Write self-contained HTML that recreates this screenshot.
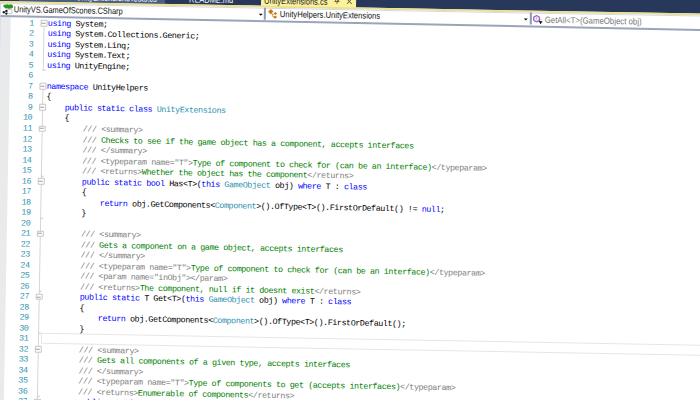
<!DOCTYPE html>
<html lang="en"><head><meta charset="utf-8"><title>UnityExtensions.cs</title>
<style>

html,body{margin:0;padding:0;width:700px;height:400px;overflow:hidden;background:#fff;}
#clip{position:absolute;left:0;top:0;width:700px;height:400px;overflow:hidden;background:#fff;}
#warp{position:absolute;left:0;top:0;width:0;height:0;transform-origin:0 0;
  transform:matrix(1.0,0.018,-0.0178,1.0,0.0,0.0);}
#warp>*{position:absolute;}
.strip{left:-60px;top:-60px;width:900px;height:61.3px;background:#28385b;}
.tab1{left:18.5px;top:-20px;width:146.5px;height:21.3px;background:#4a5f86;}
.tab3{left:261.1px;top:-20px;width:94.6px;height:22px;background:#fbf2a0;}
.ui{font-family:"Liberation Sans",sans-serif;line-height:12px;height:12px;white-space:pre;transform-origin:0 50%;}
.yel{left:-60px;top:1.2px;width:900px;height:1.8px;background:#ece08a;}
.nav{left:-60px;top:3.0px;width:900px;height:14px;background:#fff;border-top:0.6px solid #d3d9e6;}
.navb{left:-60px;top:14.7px;width:900px;height:1.5px;background:#9aa4bb;transform-origin:60px 0;transform:rotate(0.105deg);}
.arrow{width:0;height:0;border-left:2.1px solid transparent;border-right:2.1px solid transparent;border-top:2.5px solid #0c0c0c;}
.sep{top:3.2px;width:1.7px;height:11.6px;background:#8d98b1;}
.margin{left:-60px;top:15.5px;width:70.8px;height:500px;background:#e9eaec;}
.edge{left:-2px;top:3px;width:2.9px;height:420px;background:#cfd6e4;}
.code{left:0;top:17.85px;font-family:"Liberation Mono", "DejaVu Sans Mono", monospace;font-size:8.4px;line-height:10.516px;letter-spacing:-0.4288px;color:#000;white-space:pre;}
.ln{position:absolute;right:-34.3px;width:40px;text-align:right;color:#2b91af;height:10.516px;}
.cl{position:absolute;left:48.3px;height:10.516px;}
.k{color:#0000ff;} .t{color:#2b91af;} .c{color:#008000;} .x{color:#808080;}
.fold{position:absolute;box-sizing:border-box;width:6.9px;height:6.5px;border:1px solid #c6c6c6;border-radius:1px;background:#fff;left:40.9px;}
.fold i{position:absolute;left:0.6px;top:1.8px;width:3.7px;height:0.9px;background:#9c9c9c;}
.vline{position:absolute;left:43.9px;width:1.4px;background:#d6d6d6;}
.tick{position:absolute;left:43.9px;width:2.9px;height:1px;background:#cccccc;}
.cur{left:46.85px;top:332.3px;width:900px;height:8.5px;border:1.1px solid #e6e6e6;background:#fff;}

</style></head><body><div id="clip"><div id="warp">
<div class="strip"></div>
<div class="tab1"></div>
<div class="ui" style="left:75.6px;top:-10.33px;font-size:8.9px;color:#fff;transform:scaleX(0.8440)">UnityExtensionsTests.cs</div>
<div class="ui" style="left:188.7px;top:-10.33px;font-size:8.9px;color:#fff;transform:scaleX(0.8373)">README.md</div>
<div class="tab3"></div>
<div class="ui" style="left:263.9px;top:-10.38px;font-size:8.9px;color:#1a1a1a;transform:scaleX(0.8459)">UnityExtensions.cs</div>
<svg style="left:334.2px;top:-10.4px" width="6" height="8.4" viewBox="0 0 6 8.4"><path d="M1.5 5.4 V1 H4.3 V5.4 M3.6 1 V5.4 M0.3 5.5 H5.5 M2.9 5.5 V8.1" fill="none" stroke="#5d4d26" stroke-width="0.8"/></svg>
<svg style="left:345.8px;top:-8.1px" width="6.4" height="6.4" viewBox="0 0 6.4 6.4"><path d="M0.7 0.7 L5.7 5.7 M5.7 0.7 L0.7 5.7" fill="none" stroke="#514320" stroke-width="0.95"/></svg>
<div class="yel"></div>
<div class="nav"></div>
<svg style="left:1.6px;top:3.7px" width="12" height="11.5" viewBox="0 0 12 11.5"><path d="M1.2 1.6 Q2.4 0.2 4 0.6 L5 0.1 Q6.2 -0.2 7 0.5 L8.4 0 Q10.2 -0.1 10.8 1 Q11.4 2.4 10.9 3.6 Q10 4.6 8.6 4.2 L7.4 4.5 Q6.2 4.7 5.4 4.2 Q3.4 4.6 2.6 3.4 Q1.6 2.8 1.2 1.6 Z" fill="#2a9424"/><rect x="5.6" y="5.4" width="4.6" height="4.2" fill="#fff" stroke="#aab2c4" stroke-width="0.7"/><circle cx="1.9" cy="8.2" r="1.15" fill="#1d1d1d"/><circle cx="4.6" cy="6.8" r="1.1" fill="#1d1d1d"/><circle cx="4.6" cy="9.6" r="1.1" fill="#1d1d1d"/><path d="M1.9 8.2 L4.6 6.8 M1.9 8.2 L4.6 9.6" stroke="#1d1d1d" stroke-width="0.6"/></svg>
<div class="ui" style="left:14.2px;top:3.27px;font-size:8.9px;color:#141414;transform:scaleX(0.8362)">UnityVS.GameOfScones.CSharp</div>
<div class="arrow" style="left:258.6px;top:8.9px"></div>
<div class="sep" style="left:264.2px"></div>
<svg style="left:268.0px;top:4.0px" width="10" height="10" viewBox="0 0 10 10"><path d="M2.9 3.6 L4.6 5.4 H6 M4.2 5 L5.4 8.2 H6.2" fill="none" stroke="#c98a3c" stroke-width="0.8"/><path d="M0.2 2.9 L3 0.2 L5.6 2.6 L2.8 5.3 Z" fill="#cc7a10"/><path d="M5.6 4.6 L7.6 3.1 L9.4 4.6 L7.6 6.1 Z" fill="#cc7a10"/><path d="M5.4 8.1 L7.4 6.6 L9.3 8.1 L7.4 9.7 Z" fill="#cc7a10"/></svg>
<div class="ui" style="left:279.5px;top:3.22px;font-size:8.9px;color:#141414;transform:scaleX(0.8581)">UnityHelpers.UnityExtensions</div>
<div class="arrow" style="left:524.2px;top:9.2px"></div>
<div class="sep" style="left:529.9px"></div>
<svg style="left:532.8px;top:4.8px" width="11" height="11" viewBox="0 0 11 11"><path d="M0.9 2.5 L3.7 0.8 L6.6 2.5 L6.6 5.6 L3.7 7.3 L0.9 5.6 Z" fill="#f4eefa" stroke="#9a68c6" stroke-width="1.3" stroke-linejoin="round"/><path d="M3.7 2.6 V5" fill="none" stroke="#b08ad6" stroke-width="0.7"/><path d="M5.8 6.4 H9.8 L7.8 9.4 Z" fill="#151515"/><path d="M7 4.2 V5.6 M8.4 4.4 V5.6" stroke="#444" stroke-width="0.5" stroke-dasharray="0.5 0.5"/></svg>
<div class="ui" style="left:545.3px;top:3.82px;font-size:8.9px;color:#787878;transform:scaleX(0.8794)">GetAll&lt;T&gt;(GameObject obj)</div>
<div class="margin"></div>
<div class="navb"></div>
<div class="edge"></div>
<div class="cur"></div>
<div class="code">
<span class="vline" style="top:5.258px;height:47.1704px"></span>
<span class="vline" style="top:68.354px;height:420.64px"></span>
<span class="tick" style="top:51.528400000000005px"></span>
<span class="tick" style="top:156.6884px"></span>
<span class="tick" style="top:198.7524px"></span>
<span class="tick" style="top:272.3644px"></span>
<span class="tick" style="top:314.4284px"></span>
<span class="tick" style="top:377.52439999999996px"></span>
<span class="ln" style="top:0.0px">1</span>
<span class="fold" style="top:1.508px"><i></i></span>
<span class="cl" style="top:0.0px"><span class="k">using</span> System;</span>
<span class="ln" style="top:10.516px">2</span>
<span class="cl" style="top:10.516px"><span class="k">using</span> System.Collections.Generic;</span>
<span class="ln" style="top:21.032px">3</span>
<span class="cl" style="top:21.032px"><span class="k">using</span> System.Linq;</span>
<span class="ln" style="top:31.548000000000002px">4</span>
<span class="cl" style="top:31.548000000000002px"><span class="k">using</span> System.Text;</span>
<span class="ln" style="top:42.064px">5</span>
<span class="cl" style="top:42.064px"><span class="k">using</span> UnityEngine;</span>
<span class="ln" style="top:52.58px">6</span>
<span class="ln" style="top:63.096000000000004px">7</span>
<span class="fold" style="top:64.604px"><i></i></span>
<span class="cl" style="top:63.096000000000004px"><span class="k">namespace</span> UnityHelpers</span>
<span class="ln" style="top:73.612px">8</span>
<span class="cl" style="top:73.612px">{</span>
<span class="ln" style="top:84.128px">9</span>
<span class="fold" style="top:85.636px"><i></i></span>
<span class="cl" style="top:84.128px">    <span class="k">public static class</span> <span class="t">UnityExtensions</span></span>
<span class="ln" style="top:94.644px">10</span>
<span class="cl" style="top:94.644px">    {</span>
<span class="ln" style="top:105.16px">11</span>
<span class="fold" style="top:106.66799999999999px"><i></i></span>
<span class="cl" style="top:105.16px">        <span class="x">/// &lt;summary&gt;</span></span>
<span class="ln" style="top:115.676px">12</span>
<span class="cl" style="top:115.676px">        <span class="x">///</span><span class="c"> Checks to see if the game object has a component, accepts interfaces</span></span>
<span class="ln" style="top:126.19200000000001px">13</span>
<span class="cl" style="top:126.19200000000001px">        <span class="x">/// &lt;/summary&gt;</span></span>
<span class="ln" style="top:136.708px">14</span>
<span class="cl" style="top:136.708px">        <span class="x">/// &lt;typeparam name="T"&gt;</span><span class="c">Type of component to check for (can be an interface)</span><span class="x">&lt;/typeparam&gt;</span></span>
<span class="ln" style="top:147.224px">15</span>
<span class="cl" style="top:147.224px">        <span class="x">/// &lt;returns&gt;</span><span class="c">Whether the object has the component</span><span class="x">&lt;/returns&gt;</span></span>
<span class="ln" style="top:157.74px">16</span>
<span class="fold" style="top:159.24800000000002px"><i></i></span>
<span class="cl" style="top:157.74px">        <span class="k">public static bool</span> Has&lt;T&gt;(<span class="k">this</span> <span class="t">GameObject</span> obj) <span class="k">where</span> T : <span class="k">class</span></span>
<span class="ln" style="top:168.256px">17</span>
<span class="cl" style="top:168.256px">        {</span>
<span class="ln" style="top:178.772px">18</span>
<span class="cl" style="top:178.772px">            <span class="k">return</span> obj.GetComponents&lt;<span class="t">Component</span>&gt;().OfType&lt;T&gt;().FirstOrDefault() != <span class="k">null</span>;</span>
<span class="ln" style="top:189.288px">19</span>
<span class="cl" style="top:189.288px">        }</span>
<span class="ln" style="top:199.804px">20</span>
<span class="ln" style="top:210.32px">21</span>
<span class="fold" style="top:211.828px"><i></i></span>
<span class="cl" style="top:210.32px">        <span class="x">/// &lt;summary&gt;</span></span>
<span class="ln" style="top:220.836px">22</span>
<span class="cl" style="top:220.836px">        <span class="x">///</span><span class="c"> Gets a component on a game object, accepts interfaces</span></span>
<span class="ln" style="top:231.352px">23</span>
<span class="cl" style="top:231.352px">        <span class="x">/// &lt;/summary&gt;</span></span>
<span class="ln" style="top:241.868px">24</span>
<span class="cl" style="top:241.868px">        <span class="x">/// &lt;typeparam name="T"&gt;</span><span class="c">Type of component to check for (can be an interface)</span><span class="x">&lt;/typeparam&gt;</span></span>
<span class="ln" style="top:252.38400000000001px">25</span>
<span class="cl" style="top:252.38400000000001px">        <span class="x">/// &lt;param name="inObj"&gt;&lt;/param&gt;</span></span>
<span class="ln" style="top:262.9px">26</span>
<span class="cl" style="top:262.9px">        <span class="x">/// &lt;returns&gt;</span><span class="c">The component, null if it doesnt exist</span><span class="x">&lt;/returns&gt;</span></span>
<span class="ln" style="top:273.416px">27</span>
<span class="fold" style="top:274.924px"><i></i></span>
<span class="cl" style="top:273.416px">        <span class="k">public static</span> T Get&lt;T&gt;(<span class="k">this</span> <span class="t">GameObject</span> obj) <span class="k">where</span> T : <span class="k">class</span></span>
<span class="ln" style="top:283.932px">28</span>
<span class="cl" style="top:283.932px">        {</span>
<span class="ln" style="top:294.448px">29</span>
<span class="cl" style="top:294.448px">            <span class="k">return</span> obj.GetComponents&lt;<span class="t">Component</span>&gt;().OfType&lt;T&gt;().FirstOrDefault();</span>
<span class="ln" style="top:304.964px">30</span>
<span class="cl" style="top:304.964px">        }</span>
<span class="ln" style="top:315.48px">31</span>
<span class="ln" style="top:325.996px">32</span>
<span class="fold" style="top:327.50399999999996px"><i></i></span>
<span class="cl" style="top:325.996px">        <span class="x">/// &lt;summary&gt;</span></span>
<span class="ln" style="top:336.512px">33</span>
<span class="cl" style="top:336.512px">        <span class="x">///</span><span class="c"> Gets all components of a given type, accepts interfaces</span></span>
<span class="ln" style="top:347.028px">34</span>
<span class="cl" style="top:347.028px">        <span class="x">/// &lt;/summary&gt;</span></span>
<span class="ln" style="top:357.544px">35</span>
<span class="cl" style="top:357.544px">        <span class="x">/// &lt;typeparam name="T"&gt;</span><span class="c">Type of components to get (accepts interfaces)</span><span class="x">&lt;/typeparam&gt;</span></span>
<span class="ln" style="top:368.06px">36</span>
<span class="cl" style="top:368.06px">        <span class="x">/// &lt;returns&gt;</span><span class="c">Enumerable of components</span><span class="x">&lt;/returns&gt;</span></span>
<span class="ln" style="top:378.576px">37</span>
<span class="fold" style="top:380.084px"><i></i></span>
<span class="cl" style="top:378.576px">        <span class="k">public static</span> <span class="t">IEnumerable</span>&lt;T&gt; GetAll&lt;T&gt;(<span class="k">this</span> <span class="t">GameObject</span> obj) <span class="k">where</span> T : <span class="k">class</span></span>
<span class="ln" style="top:389.092px">38</span>
<span class="cl" style="top:389.092px">        {</span>
<span class="ln" style="top:399.608px">39</span>
<span class="cl" style="top:399.608px">            <span class="k">return</span> obj.GetComponents&lt;<span class="t">Component</span>&gt;().OfType&lt;T&gt;();</span>
<span class="ln" style="top:410.124px">40</span>
<span class="cl" style="top:410.124px">        }</span>
</div>
</div></div></body></html>
